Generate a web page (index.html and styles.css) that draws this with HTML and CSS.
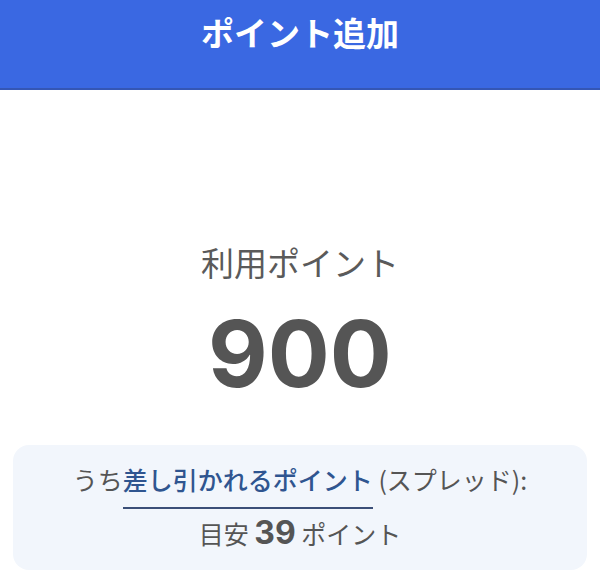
FILE: index.html
```html
<!DOCTYPE html>
<html lang="ja">
<head>
<meta charset="utf-8">
<link rel="stylesheet" href="styles.css">
</head>
<body>
<header class="header">
  <h1 class="title">ポイント追加</h1>
</header>
<main class="main">
  <section class="usage">
    <p class="usage-label">利用ポイント</p>
    <p class="usage-value">900</p>
  </section>
  <section class="spread">
    <p class="spread-line">うち<span class="spread-link">差し引かれるポイント</span> (スプレッド):</p>
    <p class="spread-amount">目安 <span class="spread-num">39</span> ポイント</p>
  </section>
</main>
</body>
</html>
```

FILE: styles.css
```css
* { box-sizing: border-box; }
html, body { margin: 0; padding: 0; background: #ffffff; }
body {
  font-family: "Noto Sans CJK JP", "Noto Sans", sans-serif;
  color: #555555;
}
.header {
  height: 90px;
  background: #3a68e2;
  border-bottom: 2px solid #3456b5;
  display: flex;
  align-items: center;
  justify-content: center;
  padding-bottom: 24px;
}
.title {
  margin: 0;
  color: #ffffff;
  font-size: 33px;
  line-height: 40px;
  font-weight: 700;
}
.main {
  display: flex;
  flex-direction: column;
  align-items: center;
  padding: 0 13px;
}
.usage {
  display: flex;
  flex-direction: column;
  align-items: center;
  padding-top: 152px;
}
.usage-label {
  margin: 0;
  font-size: 33px;
  line-height: 40px;
  color: #5a5a5a;
}
.usage-value {
  margin: 27px 0 0;
  font-family: "Inter", "Noto Sans", sans-serif;
  font-size: 92px;
  line-height: 90px;
  font-weight: 700;
  color: #555555;
}
.spread {
  margin-top: 46px;
  width: 100%;
  background: #f2f6fc;
  border-radius: 16px;
  padding: 14px 0 18px;
  display: flex;
  flex-direction: column;
  align-items: center;
}
.spread-line {
  margin: 0;
  font-size: 25px;
  line-height: 40px;
  color: #555555;
}
.spread-link {
  color: #2f5590;
  font-weight: 500;
  border-bottom: 2px solid #3b4f78;
  padding-bottom: 10px;
}
.spread-amount {
  margin: 15px 0 0;
  font-size: 25px;
  line-height: 38px;
  color: #555555;
}
.spread-num {
  font-family: "Inter", "Noto Sans", sans-serif;
  font-size: 32px;
  font-weight: 700;
}
```
